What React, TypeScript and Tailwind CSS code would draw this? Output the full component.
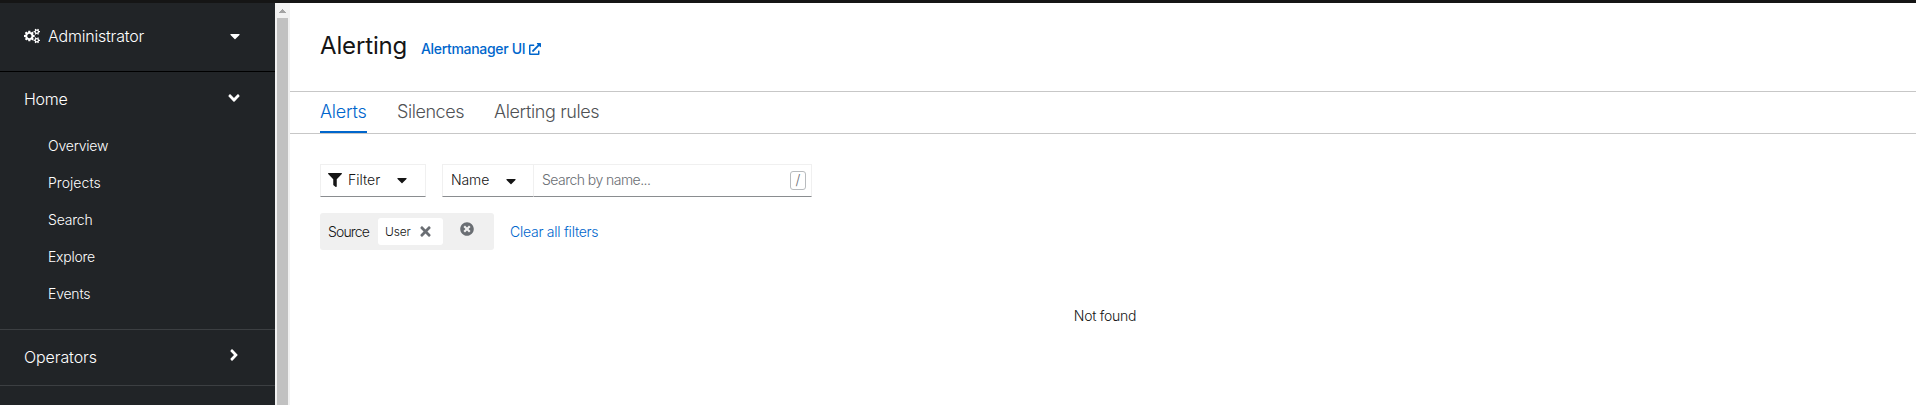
import type { ReactNode } from "react";
import { FaAngleDown, FaAngleRight, FaCaretDown, FaExternalLinkAlt, FaFilter, FaTimes, FaTimesCircle } from "react-icons/fa";

const homeItems = [
  { label: "Overview", spacing: "tracking-[-0.2px]" },
  { label: "Projects", spacing: "tracking-[0.05px]" },
  { label: "Search", spacing: "tracking-[-0.2px]" },
  { label: "Explore", spacing: "tracking-[-0.25px]" },
  { label: "Events", spacing: "tracking-[-0.2px]" },
];

function GearsIcon({ className }: { className: string }) {
  return (
    <svg viewBox="0 0 1920 1792" fill="currentColor" className={className}>
      <path
        fillRule="evenodd"
        d="M896 896q0-106-75-181t-181-75-181 75-75 181 75 181 181 75 181-75 75-181zm384-91v185q0 10-7 19.500t-16 10.500l-155 24q-11 35-32 76 34 48 90 115 7 11 7 20 0 12-7 19-23 30-82.500 89.500t-78.500 59.500q-11 0-21-7l-115-90q-37 19-77 31-11 108-23 155-7 24-30 24h-186q-11 0-20-7.500t-10-17.500l-23-153q-34-10-75-31l-118 89q-7 7-20 7-11 0-21-8-144-133-144-160 0-9 7-19 10-14 41-53t47-61q-23-44-35-82l-152-24q-10-1-17-9.500t-7-19.500v-185q0-10 7-19.500t16-10.500l155-24q11-35 32-76-34-48-90-115-7-11-7-20 0-12 7-20 22-30 82-89t79-59q11 0 21 7l115 90q34-18 77-32 11-108 23-154 7-24 30-24h186q11 0 20 7.500t10 17.500l23 153q34 10 75 31l118-89q8-7 20-7 11 0 21 8 144 133 144 160 0 8-7 19-12 16-42 54t-45 60q23 48 34 82l152 23q10 2 17 10.500t7 19.500z"
      />
      {[384, 1408].map((cy) => (
        <g key={cy} fill="none" stroke="currentColor">
          <circle cx="1536" cy={cy} r="205" strokeWidth="154" />
          <path d={`M1152 ${cy}h160M1760 ${cy}h160M1424 ${cy - 194}l-80-138M1728 ${cy + 332}l-80-138M1344 ${cy + 332}l80-138M1648 ${cy - 194}l80-138`} strokeWidth="150" />
        </g>
      ))}
    </svg>
  );
}

function SectionRow({ label, icon, className }: { label: string; icon: ReactNode; className: string }) {
  return (
    <button className={`flex w-full items-center justify-between pl-6 pr-8 pb-[2px] text-base font-light text-white ${className}`}>
      <span>{label}</span>
      {icon}
    </button>
  );
}

function Sidebar() {
  return (
    <nav className="w-[275px] shrink-0 bg-[#212427] text-white">
      <button className="flex h-[69px] w-full items-center border-b border-black pb-[2px] pl-6 pr-8 text-base font-light">
        <GearsIcon className="mr-2 size-4" />
        <span className="grow text-left tracking-[-0.2px]">Administrator</span>
        <FaCaretDown className="size-4" />
      </button>
      <div className="h-[257px]">
        <SectionRow label="Home" className="h-[55px] tracking-[-0.3px]" icon={<FaAngleDown className="-mt-[2px] size-[18px]" />} />
        <ul>
          {homeItems.map((item) => (
            <li key={item.label} className={`flex h-[37px] items-center pl-12 text-sm font-light ${item.spacing}`}>
              {item.label}
            </li>
          ))}
        </ul>
      </div>
      <SectionRow label="Operators" className="h-[57px] border-y border-[#3c3f42] tracking-[-0.1px]" icon={<FaAngleRight className="-mt-[3px] size-[18px]" />} />
    </nav>
  );
}

function Scrollbar() {
  return (
    <div className="flex w-[15px] shrink-0 flex-col items-center bg-[#f1f1f1]">
      <svg className="h-[15px] w-[15px] shrink-0" viewBox="0 0 15 15" shapeRendering="crispEdges">
        <path d="M4 10V9h1V8h1V7h1V6h1v1h1v1h1v1h1v1z" fill="#a3a3a3" />
      </svg>
      <div className="w-[11px] grow bg-[#c1c1c1]" />
    </div>
  );
}

export default function App() {
  return (
    <div className="flex h-[405px] w-[1916px] flex-col overflow-hidden bg-white font-['Inter','Open_Sans',sans-serif] text-[#151515]">
      <div className="h-[3px] shrink-0 bg-[#151515]" />
      <div className="flex min-h-0 grow">
        <Sidebar />
        <Scrollbar />
        <main className="min-w-0 grow">
          <header className="flex h-[88px] pl-[30px] pt-[25px]">
            <h1 className="w-[101px] whitespace-nowrap text-2xl leading-9 tracking-[-0.15px]">Alerting</h1>
            <a className="mt-[11px] flex h-5 items-center gap-1 whitespace-nowrap text-sm font-medium tracking-[-0.32px] text-[#0066cc]">
              <span>Alertmanager UI</span>
              <FaExternalLinkAlt className="size-3" />
            </a>
          </header>
          <div className="flex h-[43px] border-y border-[#c7c7c7] pl-[30px] pb-px text-lg font-light text-[#4f5255]">
            <div className="mr-[30px] flex w-[47px] items-center whitespace-nowrap border-b-2 border-[#0066cc] -mb-px tracking-[-0.25px] text-[#0066cc]">
              Alerts
            </div>
            <div className="flex w-[97px] items-center whitespace-nowrap pb-px tracking-[-0.45px]">Silences</div>
            <div className="flex items-center whitespace-nowrap pb-px tracking-[-0.38px]">Alerting rules</div>
          </div>
          <div className="flex pl-[30px] pt-[30px] text-sm font-light">
            <button className="mr-4 flex h-[33px] w-[106px] items-center border border-[#f0f0f0] border-b-[#8a8d90] pl-[7px] pr-[15px] pb-px">
              <FaFilter className="mr-[6px] size-[14px]" />
              <span className="grow text-left">Filter</span>
              <FaCaretDown className="size-4" />
            </button>
            <button className="flex h-[33px] w-[91px] items-center border border-r-0 border-[#f0f0f0] border-b-[#8a8d90] pl-2 pr-[14px] pb-px">
              <span className="grow text-left tracking-[-0.1px]">Name</span>
              <FaCaretDown className="mt-[2px] size-4" />
            </button>
            <div className="flex h-[33px] w-[279px] items-center justify-between border border-[#f0f0f0] border-b-[#8a8d90] pl-2 pr-[5px] pb-px text-[#6a6e73]">
              <span className="tracking-[-0.54px]">Search by name...</span>
              <kbd className="flex h-[19px] w-4 items-center justify-center rounded-[3px] border border-[#b8bbbe] font-['Inter',sans-serif] text-sm">/</kbd>
            </div>
          </div>
          <div className="flex items-center pl-[30px] pt-4 text-sm font-light">
            <div className="mr-4 flex h-[37px] w-[174px] items-center rounded-[3px] bg-[#f0f0f0] pl-2">
              <span className="w-[50px] tracking-[-0.85px]">Source</span>
              <span className="flex h-[27px] w-[65px] items-center rounded-[3px] bg-white pl-[7px] text-xs">
                <span className="w-[33px] tracking-[-0.15px]">User</span>
                <FaTimes className="-mt-px size-[15px] text-[#6a6e73]" />
              </span>
              <FaTimesCircle className="mb-[5px] ml-[17px] size-[14px] text-[#6a6e73]" />
            </div>
            <a className="tracking-[-0.25px] text-[#0066cc]">Clear all filters</a>
          </div>
          <div className="flex justify-center pl-[4px] pt-[55px] text-sm font-light leading-[21px] tracking-[-0.25px]">
            <span>Not found</span>
          </div>
        </main>
      </div>
    </div>
  );
}
